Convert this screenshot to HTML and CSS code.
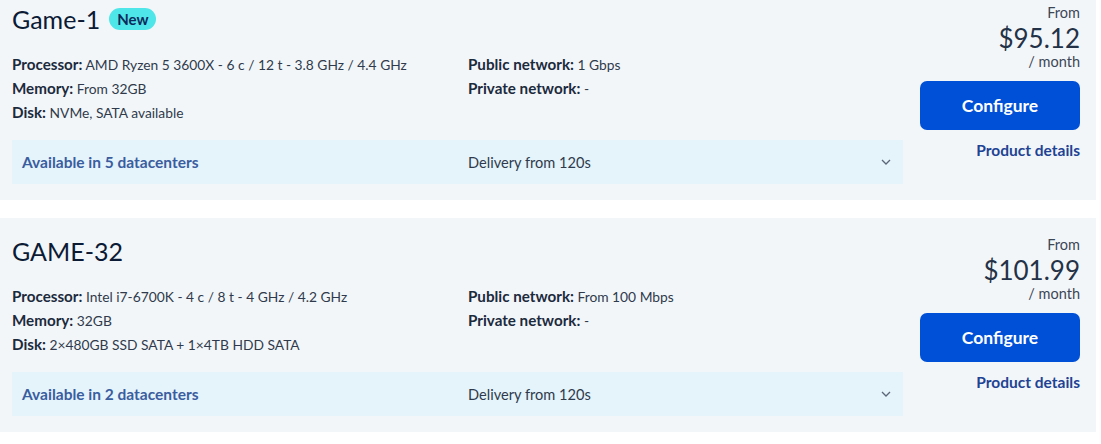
FILE: index.html
```html
<!DOCTYPE html>
<html lang="en">
<head>
  <meta charset="UTF-8">
  <meta name="viewport" content="width=device-width, initial-scale=1.0">
  <title>Game servers</title>
  <link rel="stylesheet" href="styles.css">
</head>
<body>
  <div class="list">
    <div class="offer">
      <div class="main">
        <h2 class="name">Game-1 <span class="badge">New</span></h2>
        <div class="specs">
          <div>
            <p><b>Processor:</b> AMD Ryzen 5 3600X - 6 c / 12 t - 3.8 GHz / 4.4 GHz</p>
            <p><b>Memory:</b> From 32GB</p>
            <p><b>Disk:</b> NVMe, SATA available</p>
          </div>
          <div>
            <p><b>Public network:</b> 1 Gbps</p>
            <p><b>Private network:</b> -</p>
          </div>
        </div>
        <div class="availability">
          <span class="dc">Available in 5 datacenters</span>
          <span class="delivery">Delivery from 120s</span>
          <svg class="chevron" width="10" height="6" viewBox="0 0 10 6"><path d="M1 1l4 4 4-4" fill="none" stroke="#5b6778" stroke-width="1.3"/></svg>
        </div>
      </div>
      <div class="side">
        <div class="from">From</div>
        <div class="price">$95.12</div>
        <div class="period">/ month</div>
        <button class="btn">Configure</button>
        <a class="details" href="#">Product details</a>
      </div>
    </div>

    <div class="offer">
      <div class="main">
        <h2 class="name">GAME-32</h2>
        <div class="specs">
          <div>
            <p><b>Processor:</b> Intel i7-6700K - 4 c / 8 t - 4 GHz / 4.2 GHz</p>
            <p><b>Memory:</b> 32GB</p>
            <p><b>Disk:</b> 2×480GB SSD SATA + 1×4TB HDD SATA</p>
          </div>
          <div>
            <p><b>Public network:</b> From 100 Mbps</p>
            <p><b>Private network:</b> -</p>
          </div>
        </div>
        <div class="availability">
          <span class="dc">Available in 2 datacenters</span>
          <span class="delivery">Delivery from 120s</span>
          <svg class="chevron" width="10" height="6" viewBox="0 0 10 6"><path d="M1 1l4 4 4-4" fill="none" stroke="#5b6778" stroke-width="1.3"/></svg>
        </div>
      </div>
      <div class="side">
        <div class="from">From</div>
        <div class="price">$101.99</div>
        <div class="period">/ month</div>
        <button class="btn">Configure</button>
        <a class="details" href="#">Product details</a>
      </div>
    </div>
  </div>
</body>
</html>
```

FILE: styles.css
```css
body {
  margin: 0;
  font-family: Lato, 'Noto Sans', sans-serif;
  background: #fff;
  color: #2f3b4c;
}

.list {
  width: 1096px;
  margin-top: -14px;
  display: flex;
  flex-direction: column;
  gap: 18px;
}

.offer {
  background: #f3f6f9;
  display: flex;
  gap: 17px;
  padding: 17px 16px 16px 12px;
}

.main {
  flex: 1;
}

.name {
  margin: 0;
  font-size: 25px;
  font-weight: 400;
  line-height: 32px;
  color: #0b1a35;
  display: flex;
  align-items: center;
  gap: 9px;
}

.badge {
  display: inline-block;
  background: #4fe6e9;
  color: #0b2a5c;
  font-size: 15px;
  font-weight: 700;
  line-height: 22px;
  padding: 0 8px;
  border-radius: 11px;
}

.specs {
  display: grid;
  grid-template-columns: 456px 1fr;
  margin-top: 18px;
}

.specs p {
  margin: 0;
  font-size: 13.8px;
  line-height: 24px;
  height: 24px;
}

.specs b {
  font-size: 15.2px;
  line-height: 1;
  color: #1c2a3d;
}

.availability {
  margin-top: 15px;
  height: 44px;
  background: #e5f3fb;
  display: grid;
  grid-template-columns: 446px 1fr auto;
  align-items: center;
  padding: 0 12px 0 10px;
}

.dc {
  font-size: 15.5px;
  font-weight: 700;
  color: #3a5d9f;
}

.delivery {
  font-size: 14.6px;
}

.side {
  width: 160px;
  display: flex;
  flex-direction: column;
  align-items: flex-end;
  text-align: right;
}

.from {
  font-size: 14.5px;
  line-height: 20px;
  color: #3c4757;
}

.price {
  font-size: 26px;
  line-height: 30px;
  color: #243247;
}

.period {
  font-size: 14.5px;
  line-height: 18px;
  color: #3c4757;
}

.btn {
  margin-top: 10px;
  width: 160px;
  height: 49px;
  border: none;
  border-radius: 7px;
  background: #0050d7;
  color: #fff;
  font-family: inherit;
  font-size: 17.5px;
  font-weight: 700;
  cursor: pointer;
}

.details {
  margin-top: 10px;
  font-size: 15.5px;
  line-height: 20px;
  font-weight: 700;
  color: #1e4394;
  text-decoration: none;
}
```
